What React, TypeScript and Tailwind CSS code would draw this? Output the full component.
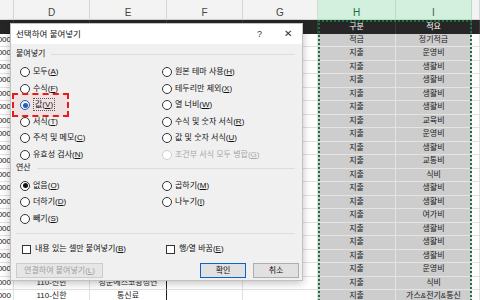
import React from "react";

const W = ["w-[14px]", "w-[76px]", "w-[77px]", "w-[76px]", "w-[75px]", "w-[78px]", "w-[76px]", "flex-1"];

const colH = ["구분", "적금", ...Array(19).fill("지출")];
const colI = [
  "적요", "정기적금", "운영비", "생활비", "생활비", "생활비", "생활비", "교육비", "운영비", "생활비", "교통비",
  "식비", "생활비", "생활비", "여가비", "생활비", "생활비", "생활비", "운영비", "식비", "가스&전기&통신",
];
const colD: Record<number, string> = { 19: "110-신한", 20: "110-신한" };
const colE: Record<number, string> = { 19: "청운에스코왕정연", 20: "통신료" };

function SheetRow({ i }: { i: number }) {
  if (i === 0) {
    return (
      <div className="flex h-[13.5px] bg-[#262626] text-white">
        {W.map((w, c) => (
          <div key={c} className={`${w} flex items-center justify-center border-r border-[#3a3a3a]`}>
            {c === 5 ? colH[0] : c === 6 ? colI[0] : ""}
          </div>
        ))}
      </div>
    );
  }
  return (
    <div className="flex h-[13.5px]">
      {W.map((w, c) => {
        const sel = c === 5 || c === 6;
        const text = c === 0 ? "30,000" : c === 1 ? colD[i] : c === 2 ? colE[i] : c === 5 ? colH[i] : c === 6 ? colI[i] : "";
        return (
          <div
            key={c}
            className={`${w} flex items-center overflow-hidden whitespace-nowrap border-b border-r ${
              sel ? "bg-[#cdcdcd] border-[#e4e4e4] text-[#222]" : "bg-white border-[#e1e1e1] text-[#222]"
            } ${c === 0 ? "justify-end pr-[2px]" : "justify-center"} ${c === 2 && i >= 19 ? "border-r-[#222]" : ""}`}
          >
            {text}
          </div>
        );
      })}
    </div>
  );
}

function Radio({ label, on, blue, disabled }: { label: React.ReactNode; on?: boolean; blue?: boolean; disabled?: boolean }) {
  return (
    <div className={`flex items-center h-[16.5px] gap-[3px] ${disabled ? "text-[#a6a6a6]" : "text-[#111]"}`}>
      <span
        className={`w-[10px] h-[10px] rounded-full border bg-white flex items-center justify-center ${
          disabled ? "border-[#cfcfcf]" : blue ? "border-[#0a64c8]" : "border-[#333]"
        }`}
      >
        {on && <span className={`w-[5px] h-[5px] rounded-full ${blue ? "bg-[#0a64c8]" : "bg-[#111]"}`} />}
      </span>
      <span>{label}</span>
    </div>
  );
}

function Check({ label }: { label: React.ReactNode }) {
  return (
    <div className="flex items-center gap-[4px] h-[16px]">
      <span className="w-[9px] h-[9px] border border-[#333] bg-white" />
      <span>{label}</span>
    </div>
  );
}

function GroupTitle({ text, h }: { text: string; h: string }) {
  return (
    <div className={`flex items-center ${h}`}>
      <span className="text-[#111]">{text}</span>
      <span className="flex-1 h-px bg-[#dcdcdc] ml-[6px] mr-[4px]" />
    </div>
  );
}

function Dialog() {
  return (
    <div className="absolute left-[10px] top-[23px] w-[293px] h-[258px] border border-[#c2c2c2] bg-[#f0f0f0] shadow-[0_2px_8px_rgba(0,0,0,0.25)] text-[8px] leading-none">
      <div className="flex items-center h-[20px] bg-white pl-[5px] pr-[10px] text-[8.5px] text-[#111]">
        <span>선택하여 붙여넣기</span>
        <span className="ml-auto text-[9px] text-[#333]">?</span>
        <span className="ml-[22px] text-[10px] text-[#333]">✕</span>
      </div>
      <div className="pl-[5px] pr-[3px]">
        <GroupTitle text="붙여넣기" h="h-[20px]" />
        <div className="grid grid-cols-[142px_1fr] pl-[4px]">
          <div className="flex flex-col">
            <Radio label={<>모두(<u>A</u>)</>} />
            <Radio label={<>수식(<u>F</u>)</>} />
            <Radio
              on
              blue
              label={<span className="border border-dotted border-[#555] px-[1px] py-[1px]">값(<u>V</u>)</span>}
            />
            <Radio label={<>서식(<u>T</u>)</>} />
            <Radio label={<>주석 및 메모(<u>C</u>)</>} />
            <Radio label={<>유효성 검사(<u>N</u>)</>} />
          </div>
          <div className="flex flex-col">
            <Radio label={<>원본 테마 사용(<u>H</u>)</>} />
            <Radio label={<>테두리만 제외(<u>X</u>)</>} />
            <Radio label={<>열 너비(<u>W</u>)</>} />
            <Radio label={<>수식 및 숫자 서식(<u>R</u>)</>} />
            <Radio label={<>값 및 숫자 서식(<u>U</u>)</>} />
            <Radio disabled label={<>조건부 서식 모두 병합(<u>G</u>)</>} />
          </div>
        </div>
        <GroupTitle text="연산" h="h-[10px]" />
        <div className="grid grid-cols-[142px_1fr] pl-[4px] pt-[4.5px]">
          <div className="flex flex-col">
            <Radio on label={<>없음(<u>O</u>)</>} />
            <Radio label={<>더하기(<u>D</u>)</>} />
            <Radio label={<>빼기(<u>S</u>)</>} />
          </div>
          <div className="flex flex-col">
            <Radio label={<>곱하기(<u>M</u>)</>} />
            <Radio label={<>나누기(<u>I</u>)</>} />
          </div>
        </div>
        <div className="mt-[6px] mr-[4px] h-px bg-[#dcdcdc]" />
        <div className="grid grid-cols-[142px_1fr] pl-[6px] mt-[7px] text-[#111]">
          <Check label={<>내용 있는 셀만 붙여넣기(<u>B</u>)</>} />
          <div className="pl-[2px]">
            <Check label={<>행/열 바꿈(<u>E</u>)</>} />
          </div>
        </div>
        <div className="flex items-center mt-[6px] h-[15px]">
          <div className="w-[87px] h-full flex items-center justify-center border border-[#cccccc] bg-[#e6e6e6] text-[#a0a0a0]">
            연결하여 붙여넣기(<u>L</u>)
          </div>
          <div className="ml-auto w-[46px] h-full flex items-center justify-center border border-[#0a64c8] bg-[#e1e1e1] text-[#111]">
            확인
          </div>
          <div className="ml-[7px] w-[46px] h-full flex items-center justify-center border border-[#adadad] bg-[#e1e1e1] text-[#111]">
            취소
          </div>
        </div>
      </div>
      <div className="absolute left-[1px] top-[69px] w-[57px] h-[24px] border-2 border-dashed border-[#e81a1a] bg-[rgba(230,40,40,0.07)]" />
    </div>
  );
}

export default function App() {
  return (
    <div className="relative w-[480px] h-[300px] overflow-hidden bg-white [font-family:'Liberation_Sans','Noto_Sans_CJK_KR',sans-serif] text-[8px] leading-none">
      <div className="flex h-[20px] bg-[#f3f3f3] text-[10px] text-[#444]">
        {W.map((w, c) => {
          const sel = c === 5 || c === 6;
          return (
            <div
              key={c}
              className={`${w} flex items-center justify-center pt-[6px] border-r border-b ${
                sel ? "bg-[#d3f0de] text-[#1f6b41] border-[#b9dcc6]" : "border-[#d6d6d6]"
              }`}
            >
              {["", "D", "E", "F", "G", "H", "I", ""][c]}
            </div>
          );
        })}
      </div>
      {colI.map((_, i) => (
        <SheetRow key={i} i={i} />
      ))}
      <div className="absolute left-[318px] top-[20px] w-[154px] h-[300px] border-2 border-dotted border-[#1d7044]" />
      <Dialog />
    </div>
  );
}
